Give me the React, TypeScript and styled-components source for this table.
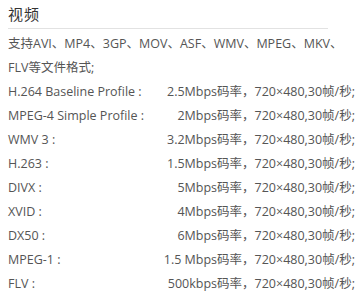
import React from 'react';
import styled, { createGlobalStyle } from 'styled-components';

const GlobalStyle = createGlobalStyle`
    html, body {
        margin: 0;
        padding: 0;
        background: #fff;
    }

    body {
        font-family: "Open Sans", "Noto Sans CJK SC", sans-serif;
        color: #555;
    }
`;

const Panel = styled.div`
    width: 364px;
    height: 298px;
    padding: 0 9px 0 8px;
    box-sizing: border-box;
    overflow: hidden;
`;

const Title = styled.h3`
    margin: 0;
    width: 320px;
    height: 28px;
    line-height: 28px;
    font-size: 15px;
    font-weight: 400;
    color: #333;
    border-bottom: 1px solid #e2e2e2;
    letter-spacing: 1px;
`;

const Intro = styled.p`
    margin: 3px 0 0;
    font-size: 12.5px;
    line-height: 24px;
    white-space: nowrap;
`;

const Row = styled.div`
    display: flex;
    justify-content: space-between;
    font-size: 12.5px;
    line-height: 24px;
    white-space: nowrap;
`;

const Label = styled.span`
    flex: 0 0 auto;
`;

const Value = styled.span`
    text-align: right;
`;

const formats = [
    { name: 'H.264 Baseline Profile :', rate: '2.5Mbps' },
    { name: 'MPEG-4 Simple Profile :', rate: '2Mbps' },
    { name: 'WMV 3 :', rate: '3.2Mbps' },
    { name: 'H.263 :', rate: '1.5Mbps' },
    { name: 'DIVX :', rate: '5Mbps' },
    { name: 'XVID :', rate: '4Mbps' },
    { name: 'DX50 :', rate: '6Mbps' },
    { name: 'MPEG-1 :', rate: '1.5 Mbps' },
    { name: 'FLV :', rate: '500kbps' },
];

const App = () => (
    <>
        <GlobalStyle />
        <Panel>
            <Title>视频</Title>
            <Intro>
                支持AVI、MP4、3GP、MOV、ASF、WMV、MPEG、MKV、
                <br />
                FLV等文件格式;
            </Intro>
            {formats.map((f) => (
                <Row key={f.name}>
                    <Label>{f.name}</Label>
                    <Value>{`${f.rate}码率，720×480,30帧/秒;`}</Value>
                </Row>
            ))}
        </Panel>
    </>
);

export default App;
